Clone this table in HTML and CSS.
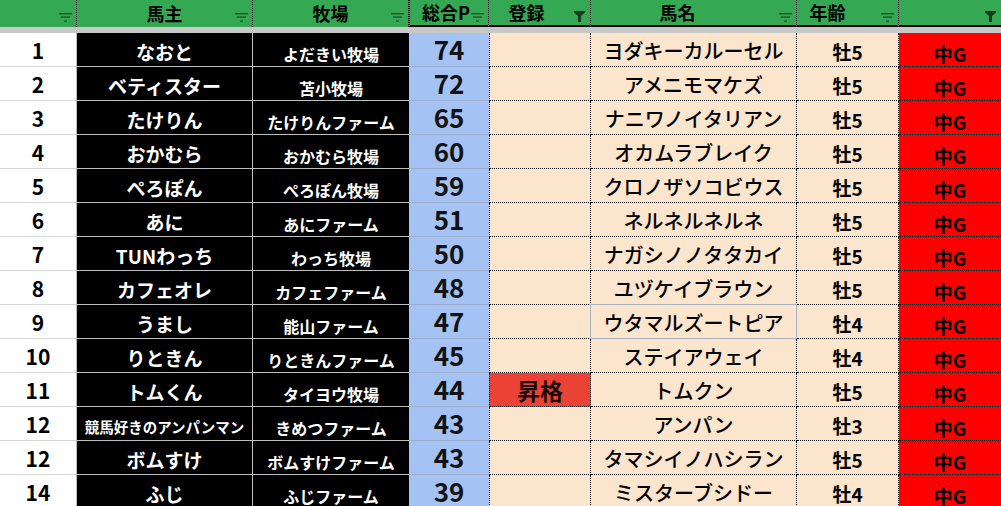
FILE: index.html
```html
<!DOCTYPE html>
<html lang="ja">
<head>
<meta charset="utf-8">
<title>馬主ランキング</title>
<link rel="stylesheet" href="styles.css">
</head>
<body>
<div class="sheet">
  <div class="hcell h-a"><svg class="ico sort" viewBox="0 0 13 9"><rect x="0" y="0" width="13" height="1.4"/><rect x="2" y="3.4" width="9" height="1.3"/><rect x="5" y="7.4" width="3" height="1.3"/></svg></div>
  <div class="hcell h-b"><span class="hl">馬主</span><svg class="ico sort" viewBox="0 0 13 9"><rect x="0" y="0" width="13" height="1.4"/><rect x="2" y="3.4" width="9" height="1.3"/><rect x="5" y="7.4" width="3" height="1.3"/></svg></div>
  <div class="hcell h-c"><span class="hl">牧場</span><svg class="ico sort" viewBox="0 0 13 9"><rect x="0" y="0" width="13" height="1.4"/><rect x="2" y="3.4" width="9" height="1.3"/><rect x="5" y="7.4" width="3" height="1.3"/></svg></div>
  <div class="hcell h-d"><span class="hl">総合P</span><svg class="ico sort" viewBox="0 0 13 9"><rect x="0" y="0" width="13" height="1.4"/><rect x="2" y="3.4" width="9" height="1.3"/><rect x="5" y="7.4" width="3" height="1.3"/></svg></div>
  <div class="hcell h-e"><span class="hl">登録</span><svg class="ico funnel" viewBox="0 0 11 11"><polygon points="0,0 11,0 11,1.5 7,5 7,11 4,11 4,5 0,1.5"/></svg></div>
  <div class="hcell h-f"><span class="hl">馬名</span><svg class="ico sort" viewBox="0 0 13 9"><rect x="0" y="0" width="13" height="1.4"/><rect x="2" y="3.4" width="9" height="1.3"/><rect x="5" y="7.4" width="3" height="1.3"/></svg></div>
  <div class="hcell h-g"><span class="hl">年齢</span><svg class="ico sort" viewBox="0 0 13 9"><rect x="0" y="0" width="13" height="1.4"/><rect x="2" y="3.4" width="9" height="1.3"/><rect x="5" y="7.4" width="3" height="1.3"/></svg></div>
  <div class="hcell h-h"><svg class="ico funnel" viewBox="0 0 11 11"><polygon points="0,0 11,0 11,1.5 7,5 7,11 4,11 4,5 0,1.5"/></svg></div>
  <div class="bar"></div>

  <div class="c c-a">1</div><div class="c c-b">なおと</div><div class="c c-c">よだきい牧場</div><div class="c c-d">74</div><div class="c c-e"></div><div class="c c-f">ヨダキーカルーセル</div><div class="c c-g">牡5</div><div class="c c-h">中G</div>
  <div class="c c-a">2</div><div class="c c-b">ベティスター</div><div class="c c-c">苫小牧場</div><div class="c c-d">72</div><div class="c c-e"></div><div class="c c-f">アメニモマケズ</div><div class="c c-g">牡5</div><div class="c c-h">中G</div>
  <div class="c c-a">3</div><div class="c c-b">たけりん</div><div class="c c-c">たけりんファーム</div><div class="c c-d">65</div><div class="c c-e"></div><div class="c c-f">ナニワノイタリアン</div><div class="c c-g">牡5</div><div class="c c-h">中G</div>
  <div class="c c-a">4</div><div class="c c-b">おかむら</div><div class="c c-c">おかむら牧場</div><div class="c c-d">60</div><div class="c c-e"></div><div class="c c-f">オカムラブレイク</div><div class="c c-g">牡5</div><div class="c c-h">中G</div>
  <div class="c c-a">5</div><div class="c c-b">ぺろぽん</div><div class="c c-c">ぺろぽん牧場</div><div class="c c-d">59</div><div class="c c-e"></div><div class="c c-f">クロノザソコビウス</div><div class="c c-g">牡5</div><div class="c c-h">中G</div>
  <div class="c c-a">6</div><div class="c c-b">あに</div><div class="c c-c">あにファーム</div><div class="c c-d">51</div><div class="c c-e"></div><div class="c c-f">ネルネルネルネ</div><div class="c c-g">牡5</div><div class="c c-h">中G</div>
  <div class="c c-a">7</div><div class="c c-b">TUNわっち</div><div class="c c-c">わっち牧場</div><div class="c c-d">50</div><div class="c c-e"></div><div class="c c-f">ナガシノノタタカイ</div><div class="c c-g">牡5</div><div class="c c-h">中G</div>
  <div class="c c-a">8</div><div class="c c-b">カフェオレ</div><div class="c c-c">カフェファーム</div><div class="c c-d">48</div><div class="c c-e"></div><div class="c c-f">ユヅケイブラウン</div><div class="c c-g">牡5</div><div class="c c-h">中G</div>
  <div class="c c-a">9</div><div class="c c-b">うまし</div><div class="c c-c">能山ファーム</div><div class="c c-d">47</div><div class="c c-e"></div><div class="c c-f sel">ウタマルズートピア</div><div class="c c-g">牡4</div><div class="c c-h">中G</div>
  <div class="c c-a">10</div><div class="c c-b">りときん</div><div class="c c-c">りときんファーム</div><div class="c c-d">45</div><div class="c c-e"></div><div class="c c-f">ステイアウェイ</div><div class="c c-g">牡4</div><div class="c c-h">中G</div>
  <div class="c c-a">11</div><div class="c c-b">トムくん</div><div class="c c-c">タイヨウ牧場</div><div class="c c-d">44</div><div class="c c-e up">昇格</div><div class="c c-f">トムクン</div><div class="c c-g">牡5</div><div class="c c-h">中G</div>
  <div class="c c-a">12</div><div class="c c-b long">競馬好きのアンパンマン</div><div class="c c-c">きめつファーム</div><div class="c c-d">43</div><div class="c c-e"></div><div class="c c-f">アンパン</div><div class="c c-g">牡3</div><div class="c c-h">中G</div>
  <div class="c c-a">12</div><div class="c c-b">ボムすけ</div><div class="c c-c">ボムすけファーム</div><div class="c c-d">43</div><div class="c c-e"></div><div class="c c-f">タマシイノハシラン</div><div class="c c-g">牡5</div><div class="c c-h">中G</div>
  <div class="c c-a">14</div><div class="c c-b">ふじ</div><div class="c c-c">ふじファーム</div><div class="c c-d">39</div><div class="c c-e"></div><div class="c c-f">ミスターブシドー</div><div class="c c-g">牡4</div><div class="c c-h">中G</div>
</div>
</body>
</html>
```

FILE: styles.css
```css
html, body {
  margin: 0;
  padding: 0;
  background: #ffffff;
  overflow: hidden;
}

.sheet {
  display: grid;
  grid-template-columns: 77px 176px 156px 80px 102px 206px 102px 102px;
  grid-template-rows: 27px 6px;
  grid-auto-rows: 34px;
  width: 1001px;
  font-family: "Noto Sans CJK JP", "Noto Sans", sans-serif;
  font-weight: 700;
  color: #000;
}

/* header */
.hcell {
  position: relative;
  background: #34a853;
  border-right: 1px dotted #000;
  box-sizing: border-box;
  display: flex;
  align-items: center;
  justify-content: center;
  font-size: 18px;
  line-height: 1;
  padding-bottom: 2px;
}
.h-d, .h-e, .h-f, .h-g, .h-h {
  border-bottom: 2px solid #000;
}
.h-d { border-left: 1px dotted #000; padding-right: 6px; }
.h-e { padding-right: 26px; }
.h-f { padding-right: 32px; }
.h-g { padding-right: 40px; }
.h-h { border-right: none; }

.ico {
  position: absolute;
  right: 4px;
  fill: #1d5529;
}
.sort { width: 13px; height: 9px; top: 13px; }
.funnel { width: 11px; height: 11px; top: 11px; right: 5px; fill: #173a20; }

.bar {
  grid-column: 1 / -1;
  background: #c8c8c8;
}

/* body cells */
.c {
  box-sizing: border-box;
  display: flex;
  align-items: flex-end;
  justify-content: center;
  line-height: 1;
  white-space: nowrap;
}

.c-a {
  background: #fff;
  border-bottom: 1px solid #d4d4d4;
  border-right: 1px solid #bdbdbd;
  font-size: 21px;
  padding-bottom: 5px;
}
.c-b {
  background: #000;
  color: #fff;
  border-bottom: 1px solid #bfbfbf;
  border-right: 1px solid #bfbfbf;
  font-size: 19px;
  padding-bottom: 5px;
}
.c-b.long {
  font-size: 14.5px;
  padding-bottom: 6px;
}
.c-c {
  background: #000;
  color: #fff;
  border-bottom: 1px solid #bfbfbf;
  font-size: 16px;
  padding-bottom: 4px;
}
.c-d {
  background: #a4c2f4;
  color: #121212;
  border-bottom: 1px solid #9cadcc;
  font-size: 26px;
  padding-bottom: 4px;
}
.c-e {
  background: #fce5cd;
  border-left: 1px dotted #000;
  border-right: 1px dotted #000;
  border-bottom: 1px dotted #000;
}
.c-e.up {
  background: #ea4335;
  color: #1a0806;
  font-size: 23px;
  padding-bottom: 4px;
}
.c-f {
  background: #fce5cd;
  border-right: 1px dotted #000;
  border-bottom: 1px dotted #000;
  font-size: 20px;
  font-weight: 500;
  padding-bottom: 5px;
}
.c-f.sel {
  margin: -1px 0 0 -1px;
  border: 1px solid #a8b2c3;
}
.c-g {
  background: #fce5cd;
  border-right: 1px dotted #000;
  border-bottom: 1px dotted #000;
  font-size: 19px;
  padding-bottom: 5px;
}
.c-h {
  background: #ff0000;
  border-bottom: 1px dotted #000;
  font-size: 19px;
  padding-bottom: 3px;
}
```
